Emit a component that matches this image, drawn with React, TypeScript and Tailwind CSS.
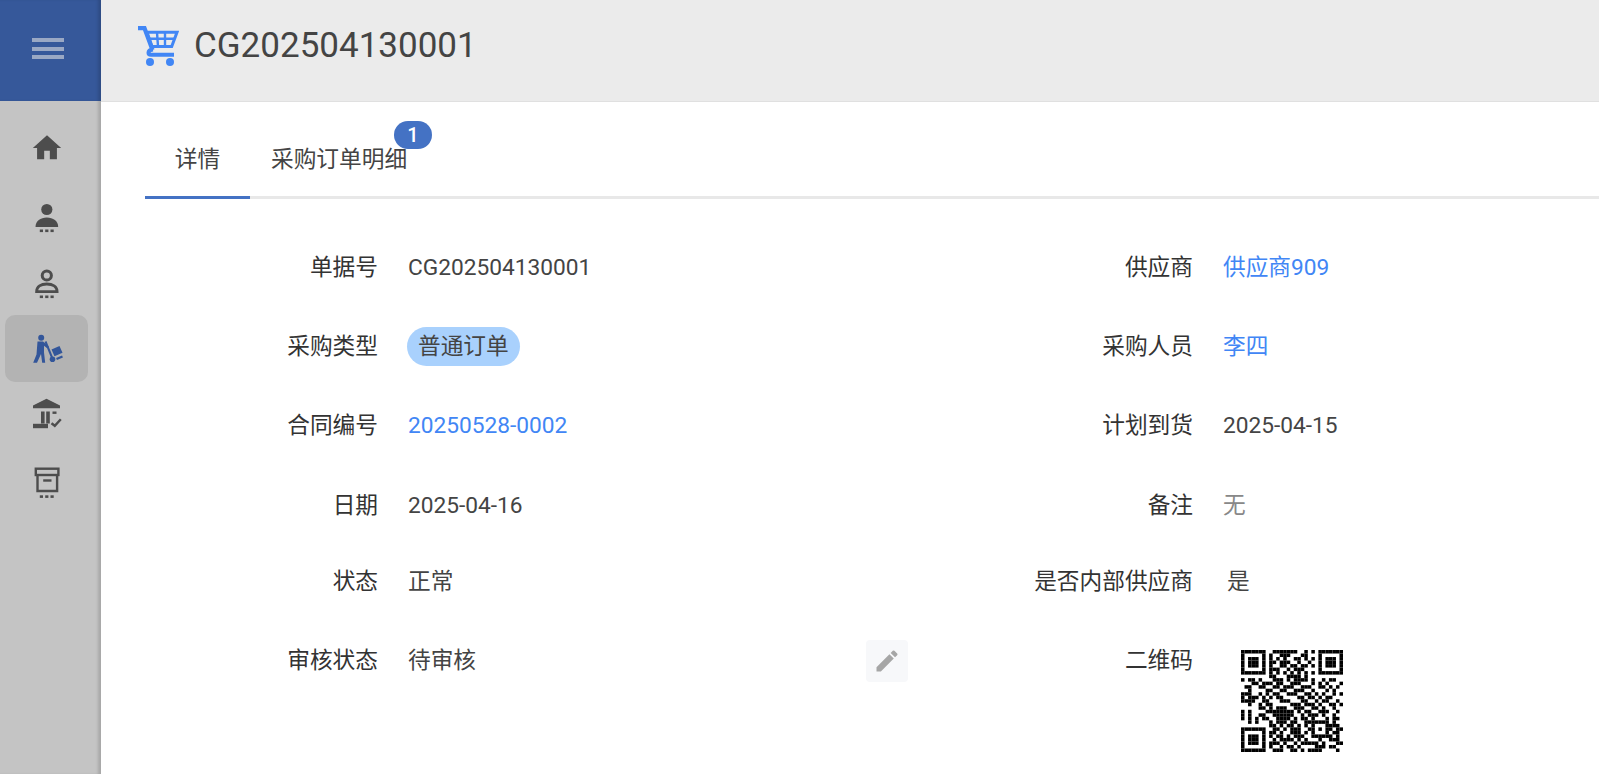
import React from "react";
import { MdHome, MdEdit } from "react-icons/md";

const QR = [
  "11111110011111110010101111111",
  "10000010100111000110001000001",
  "10111010101010011010101011101",
  "10111010110111001001001011101",
  "10111010100110110110101011101",
  "10000010111001011100001000001",
  "11111110101010101010101111111",
  "00000000110001111010000000000",
  "10110100011101011110100101100",
  "00011011101100111000101010001",
  "01100110011011100111001101010",
  "00100001100110011100100010100",
  "11100101011001110011010100101",
  "10111010101100001101101011000",
  "11110011000111000110010110010",
  "00100101100000111011101001101",
  "00000110101110011100110100100",
  "10100001111111101011001110010",
  "10100110011111100101110100100",
  "10101011001111010110100010110",
  "00101000101110110011111110100",
  "00000000110101101010100011110",
  "11111110011010111001101011011",
  "10000010110100111010100010110",
  "10111010101101011100111111010",
  "10111010010111101010001001110",
  "10111010111010010111110100011",
  "10000010100101101000011101100",
  "11111110011100110101111000010",
];

function QrCode() {
  return (
    <svg width="102" height="102" viewBox="0 0 29 29" className="block">
      {QR.flatMap((row, y) =>
        row.split("").map((c, x) => (c === "1" ? <rect key={x + "-" + y} x={x} y={y} width="1" height="1" fill="#000" /> : null))
      )}
    </svg>
  );
}

function Dots() {
  return (
    <g>
      <rect x="8.8" y="28" width="3.2" height="2.6" />
      <rect x="14.2" y="28" width="3.2" height="2.6" />
      <rect x="19.5" y="28" width="3.2" height="2.6" />
    </g>
  );
}

function PersonSolid() {
  return (
    <svg width="32" height="32" viewBox="0 -2.5 32 32" fill="#4d4d4d" className="overflow-visible">
      <circle cx="15.8" cy="8" r="5.6" />
      <path d="M4.5 25.500c0-6 5-9.500 11.300-9.500s11.400 3.500 11.400 9.500z" />
      <Dots />
    </svg>
  );
}

function PersonOutline() {
  return (
    <svg width="32" height="32" viewBox="0 -1.5 32 32" fill="#4d4d4d" className="overflow-visible">
      <circle cx="15.8" cy="8" r="4.6" fill="none" stroke="#4d4d4d" strokeWidth="3" />
      <path d="M5.600 24.200c0-5 4.400-7.700 10.200-7.700s10.300 2.700 10.300 7.700z" fill="none" stroke="#4d4d4d" strokeWidth="2.800" />
      <Dots />
    </svg>
  );
}

function Porter() {
  return (
    <svg width="32" height="32" viewBox="0 0 32 32" fill="#33569a">
      <circle cx="10.200" cy="4.700" r="3" />
      <path d="M6.500 8.500h5.500l5.800 5-1.500 1.800-3.300-2.500v6.700l1.200 10.200h-3l-1.200-8.700-4 8.700H2.200l3.300-8.200z" />
      <path d="M14.500 8.500l6.500 16" stroke="#33569a" strokeWidth="2" fill="none" />
      <circle cx="21.500" cy="26.300" r="2.800" />
      <path d="M20.500 16.500l8-3.500 3 6.700-8 3.500z" />
      <path d="M25.500 26l6-2.500" stroke="#33569a" strokeWidth="2.200" fill="none" />
    </svg>
  );
}

function Bank() {
  return (
    <svg width="32" height="32" viewBox="0 2.500 32 32" fill="#4d4d4d" className="overflow-visible">
      <path d="M15.500 1.300L29 8v2.700H2V8z" />
      <rect x="10" y="14" width="3.600" height="12" />
      <rect x="15.200" y="14" width="3.600" height="12" />
      <rect x="21.500" y="14" width="4" height="2.400" />
      <rect x="2" y="26.300" width="15" height="4.400" />
      <path d="M20.500 25.700l3.300 2.600 6-6.600" fill="none" stroke="#4d4d4d" strokeWidth="2.400" />
    </svg>
  );
}

function Archive() {
  return (
    <svg width="32" height="32" viewBox="0 0 32 32" fill="#4d4d4d">
      <rect x="4.800" y="1.700" width="22.600" height="6.300" fill="none" stroke="#4d4d4d" strokeWidth="2.400" />
      <path d="M6.500 8v16h19.600V8" fill="none" stroke="#4d4d4d" strokeWidth="2.400" />
      <rect x="12.200" y="12.300" width="8.300" height="2.400" />
      <rect x="8.800" y="28.300" width="3.200" height="2.600" />
      <rect x="14.200" y="28.300" width="3.200" height="2.600" />
      <rect x="19.500" y="28.300" width="3.200" height="2.600" />
    </svg>
  );
}

function Cart() {
  return (
    <svg width="41" height="41" viewBox="0 0 41 41" fill="none" stroke="#4186f5">
      <path d="M0 2.200h6.500L14.500 24" strokeWidth="4.200" />
      <path d="M9 6.300H39L33.700 20.500H14z" strokeWidth="3" />
      <path d="M11 12.800H36M19 6.300l1 14M27 6.300v14" strokeWidth="2.400" />
      <path d="M15 23.500c-3 .3-4.500 1.600-4.500 3.200 0 1.200 1 2 2.500 2H36" strokeWidth="4" />
      <circle cx="12" cy="36" r="4" fill="#4186f5" stroke="none" />
      <circle cx="32" cy="36" r="4" fill="#4186f5" stroke="none" />
    </svg>
  );
}

function Field({ label, h, children }: { label: string; h?: string; children: React.ReactNode }) {
  return (
    <div className={"flex " + (h ?? "h-[78.6px]")}>
      <div className="w-[233px] shrink-0 text-right leading-[39px] text-[#333]">{label}</div>
      <div className="ml-[30px] flex-1 leading-[39px] text-[#444]">{children}</div>
    </div>
  );
}

const Link = ({ children }: { children: React.ReactNode }) => <span className="text-[#4186f5]">{children}</span>;

export default function App() {
  const items = [
    { el: <MdHome size={34} color="#4d4d4d" /> },
    { el: <PersonSolid /> },
    { el: <PersonOutline /> },
    { el: <Porter />, active: true },
    { el: <Bank /> },
    { el: <Archive /> },
  ];
  return (
    <div
      className="flex h-[774px] w-[1599px] overflow-hidden bg-white text-[22.7px]"
      style={{ fontFamily: 'Roboto, "Noto Sans CJK SC", sans-serif' }}
    >
      <aside className="flex w-[101px] shrink-0 flex-col bg-[#c4c4c4] shadow-[inset_-4px_0_3px_-1px_rgba(0,0,0,0.14)]">
        <div className="flex h-[101px] shrink-0 flex-col items-center justify-center gap-[4.7px] bg-[#36589a] pb-[4px] pr-[6px] shadow-[inset_-4px_0_3px_-1px_rgba(0,0,0,0.14)]">
          <span className="h-[4px] w-[32px] bg-[#9aa8c4]" />
          <span className="h-[4px] w-[32px] bg-[#9aa8c4]" />
          <span className="h-[4px] w-[32px] bg-[#9aa8c4]" />
        </div>
        <nav className="flex flex-col pt-[13px]">
          {items.map((it, i) => (
            <div
              key={i}
              className={
                "ml-[5px] flex h-[67px] w-[83px] items-center justify-center rounded-[10px] " +
                (it.active ? "bg-[#b3b3b3]" : "")
              }
            >
              {it.el}
            </div>
          ))}
        </nav>
      </aside>
      <main className="flex min-w-0 flex-1 flex-col">
        <header className="flex h-[102px] shrink-0 items-center border-b border-[#e0e0e0] bg-[#ebebeb] pb-[8px] pl-[37px]">
          <Cart />
          <span className="ml-[15px] text-[35px] text-[#444]">CG202504130001</span>
        </header>
        <div className="pl-[44px]">
          <div className="flex h-[97px] border-b-[3px] border-[#e8e8e8]">
            <div className="-mb-[3px] flex w-[105px] items-center justify-center border-b-[3px] border-[#4472c4] pt-[23px] text-[#444]">
              详情
            </div>
            <div className="relative ml-[21px] flex items-center pt-[23px] text-[#444]">
              采购订单明细
              <span className="absolute left-[123px] top-[19px] flex h-[28px] w-[38px] items-center justify-center rounded-full bg-[#4472c4] text-[20px] font-medium text-white">
                1
              </span>
            </div>
          </div>
          <div className="grid grid-cols-[815px_1fr] pt-[49px]">
            <Field label="单据号">CG202504130001</Field>
            <Field label="供应商"><Link>供应商909</Link></Field>
            <Field label="采购类型" h="h-[79.6px]">
              <span className="-ml-px inline-block h-[39px] rounded-full bg-[#a9d1fd] px-[11px] leading-[39px]">普通订单</span>
            </Field>
            <Field label="采购人员" h="h-[79.6px]"><Link>李四</Link></Field>
            <Field label="合同编号" h="h-[79.6px]"><Link>20250528-0002</Link></Field>
            <Field label="计划到货" h="h-[79.6px]">2025-04-15</Field>
            <Field label="日期" h="h-[76.6px]">2025-04-16</Field>
            <Field label="备注" h="h-[76.6px]"><span className="text-[#888]">无</span></Field>
            <Field label="状态">正常</Field>
            <Field label="是否内部供应商"><span className="pl-[4px]">是</span></Field>
            <Field label="审核状态">
              <div className="mr-[52px] -mt-px flex items-start justify-between">
                <span className="mt-px">待审核</span>
                <button className="flex h-[42px] w-[42px] items-center justify-center rounded-[4px] bg-[#f7f8fa]">
                  <MdEdit size={28} color="#a6a6a6" />
                </button>
              </div>
            </Field>
            <Field label="二维码">
              <div className="pl-[18px] pt-[9px]"><QrCode /></div>
            </Field>
          </div>
        </div>
      </main>
    </div>
  );
}
